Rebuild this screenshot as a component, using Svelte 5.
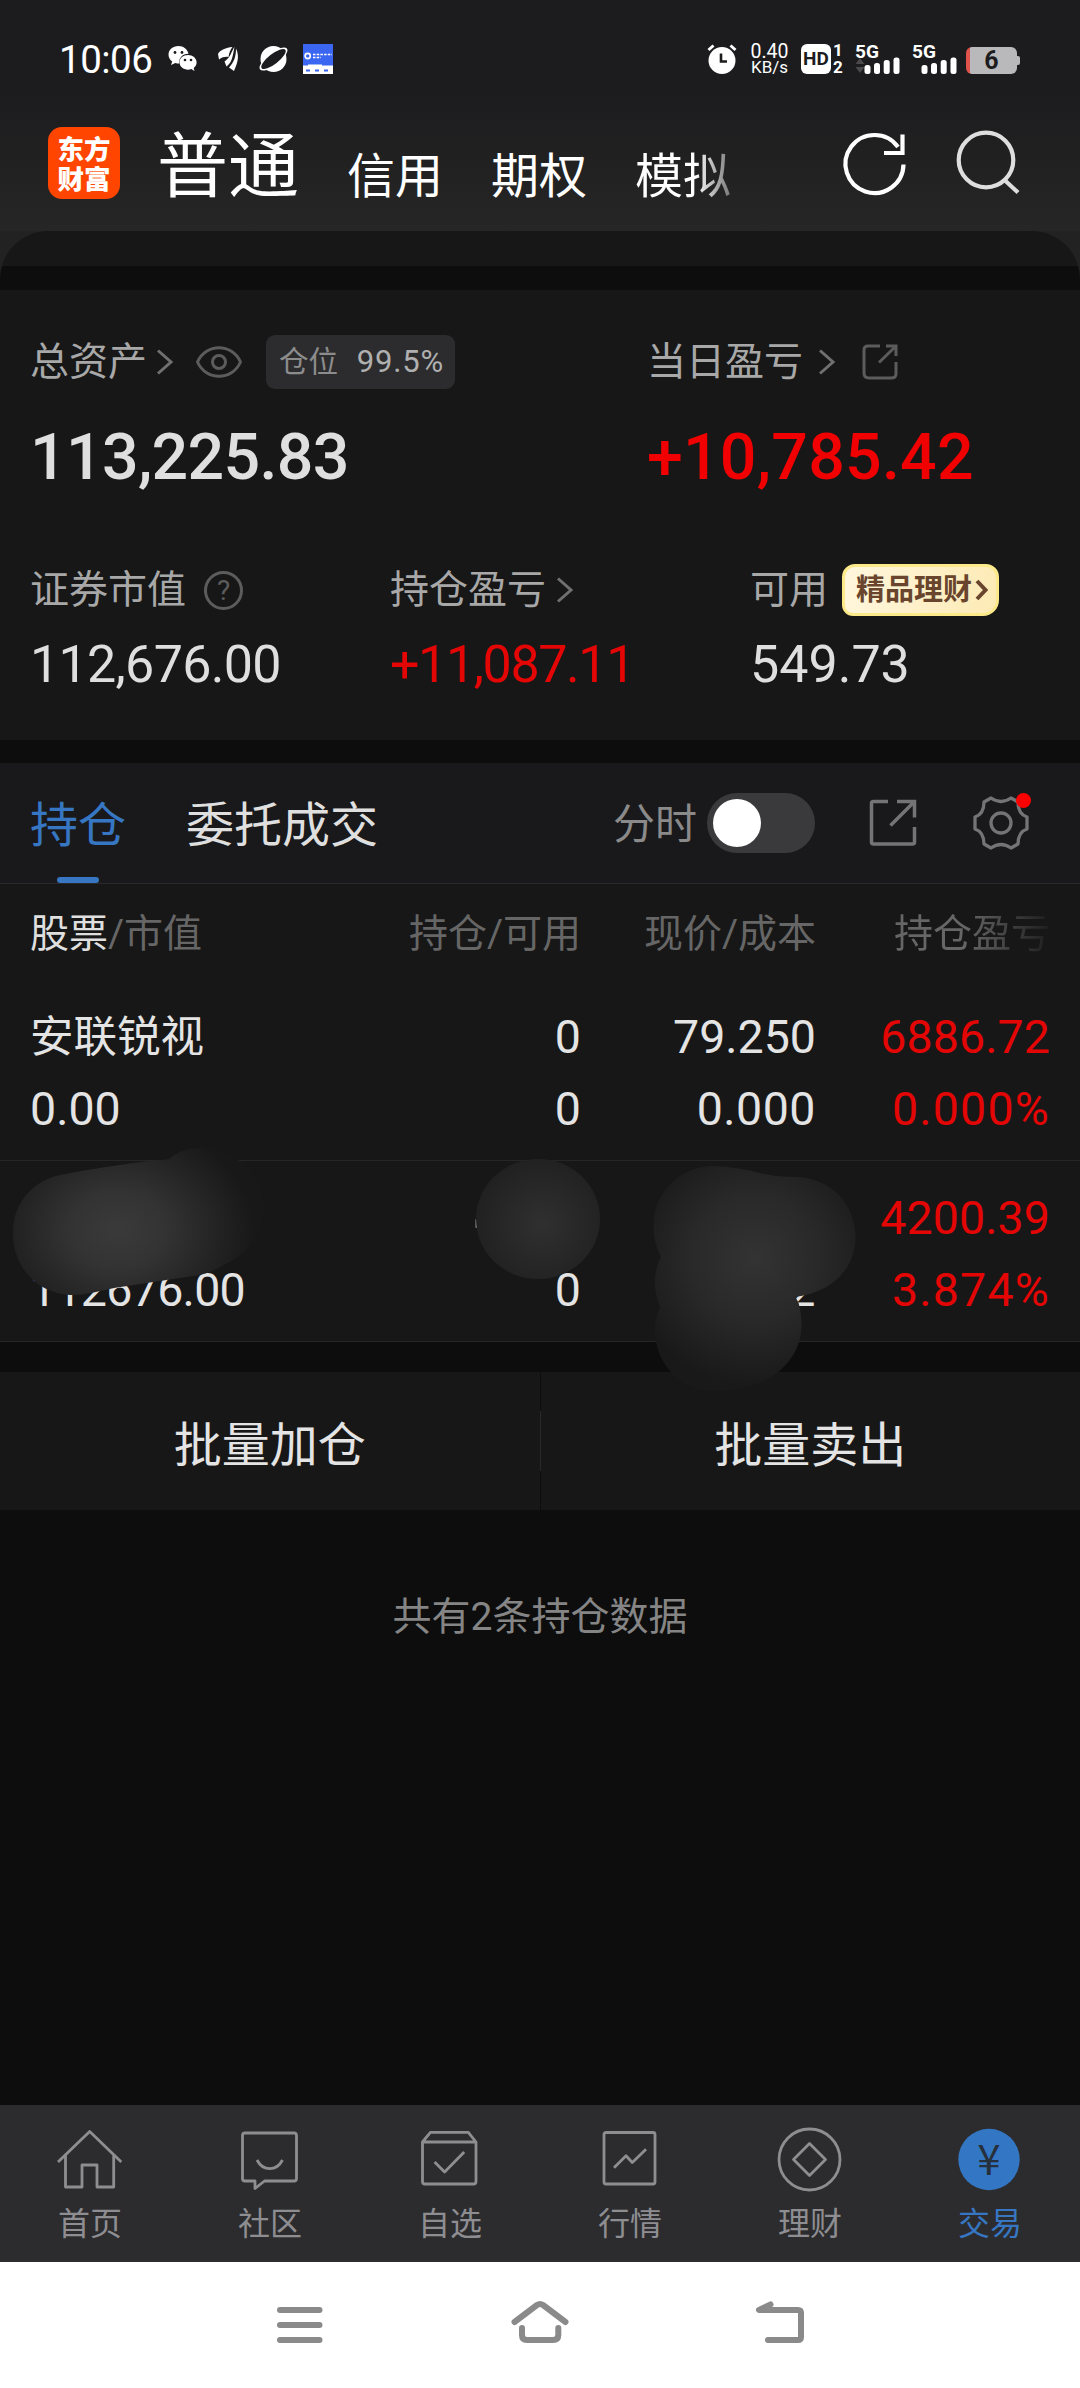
<script>
  const accounts = ['信用', '期权', '模拟'];
  const holdings = [
    { name: '安联锐视', value: '0.00', qty: '0', usable: '0', price: '79.250', cost: '0.000', profit: '6886.72', rate: '0.000%' },
    { name: '', value: '112676.00', qty: '', usable: '0', price: '', cost: '2', profit: '4200.39', rate: '3.874%' }
  ];
  const nav = [
    { id: 'home', label: '首页' },
    { id: 'social', label: '社区' },
    { id: 'watch', label: '自选' },
    { id: 'market', label: '行情' },
    { id: 'wealth', label: '理财' },
    { id: 'trade', label: '交易' }
  ];
</script>

{#snippet chevron()}
  <svg class="chev" width="18" height="28" viewBox="0 0 18 28"><path d="M2 2.5 15 14 2 25.5" /></svg>
{/snippet}

{#snippet signal(arrows)}
  <svg class="sig" width="46" height="32" viewBox="0 0 46 32">
    <text x="0" y="15" textLength="24" lengthAdjust="spacingAndGlyphs">5G</text>
    {#if arrows}<path d="m5 15 4.500 6h-9zM5 30l4.500-6h-9z" fill="#4a4a4c" />{/if}
    <rect x="9.500" y="22" width="6" height="9" rx="2.500" />
    <rect x="19" y="20" width="6" height="11" rx="2.500" />
    <rect x="28.700" y="17" width="6" height="14" rx="2.500" />
    <rect x="38.500" y="14.500" width="6" height="16.500" rx="2.500" />
  </svg>
{/snippet}

<div class="screen">
  <header>
    <div class="status">
      <span class="time">10:06</span>
      <svg class="s-wechat" width="30" height="28" viewBox="0 0 30 28">
        <path fill="#fff" d="M10.500 1C4.700 1 .5 4.900.5 9.700c0 2.800 1.500 5.200 3.700 6.800L3 20l4.300-2c1.400.5 2.700.6 4 .6C10.600 12.500 15 8.500 20.500 8.700 19.500 4.300 15.500 1 10.500 1z" />
        <path fill="#fff" d="M20 10c-4.700 0-8.500 3.200-8.500 7.300s3.800 7.400 8.500 7.400c1.200 0 2.300-.2 3.300-.6L26.500 26l-.8-3c1.900-1.400 2.900-3.400 2.900-5.700C28.600 13.200 24.700 10 20 10z" />
        <g fill="#1c1c1e"><circle cx="7" cy="7.500" r="1.400" /><circle cx="14" cy="7.500" r="1.400" /><circle cx="17" cy="15" r="1.300" /><circle cx="23" cy="15" r="1.300" /></g>
      </svg>
      <svg class="s-leaf" width="24" height="28" viewBox="0 0 24 28" fill="#fff">
        <path d="M15.500 2C9 2.500 3 5 1 9L2 14.500C5 12 9 11.500 11.500 12 12 8 13.500 4.500 15.500 2z" /><path d="M17.500 2C14 7 14 12 7.500 16.500L9.500 21.500C16 17 16 8 17.500 2z" /><path d="M19 3.500C19 12 17 17 12 22.500L17 26C20 19 23 12 19 3.500z" />
      </svg>
      <svg class="s-planet" width="31" height="28" viewBox="0 0 31 28">
        <circle cx="15.500" cy="14" r="13" fill="#fff" />
        <ellipse cx="15.500" cy="14" rx="17" ry="6.300" transform="rotate(-38 15.500 14)" fill="#fff" />
        <ellipse cx="15.500" cy="14" rx="15" ry="5" transform="rotate(-38 15.500 14)" fill="#1c1c1e" />
      </svg>
      <svg class="s-app" width="30" height="30" viewBox="0 0 30 30">
        <rect width="30" height="30" fill="#3b66f2" /><rect y="21.500" width="30" height="8.500" fill="#fff" /><rect x="5" y="20.500" width="14" height="2" fill="#fff" />
        <circle cx="4.700" cy="12" r="2.600" fill="none" stroke="#fff" stroke-width="1.700" />
        <path d="M10 10.500h19M10 13.500h8" stroke="#fff" stroke-width="1.400" stroke-dasharray="2.500 1.200" />
        <path d="M3 26.500h24" stroke="#3b66f2" stroke-width="2" stroke-dasharray="4 5" />
      </svg>
      <div class="spacer"></div>
      <svg width="30" height="32" viewBox="0 0 30 32">
        <circle cx="15" cy="17.500" r="13.500" fill="#fff" />
        <path d="M1.500 7 6.500 2.500M28.500 7 23.500 2.500" stroke="#fff" stroke-width="3" /><path d="M14 10.500V18.500h6" fill="none" stroke="#1c1c1e" stroke-width="2.600" />
      </svg>
      <div class="speed"><span>0.40</span><span class="unit">KB/s</span></div>
      <div class="hd">HD</div>
      <div class="sims"><span>1</span><span>2</span></div>
      {@render signal(true)}
      {@render signal(false)}
      <div class="battery">6</div>
    </div>
    <div class="bar">
      <div class="logo"><span>东方</span><span>财富</span></div>
      <div class="accounts">
        <span class="current">普通</span>
        {#each accounts as a, i}<span class="account" class:fade={i === 2}>{a}</span>{/each}
      </div>
      <svg class="refresh" width="68" height="72" viewBox="0 0 68 72" fill="none" stroke="#fff" stroke-width="4.200">
        <path d="M63.500 37.500A29 29 0 1 1 58 20" /><path d="M44 26H62.500V7.500" />
      </svg>
      <svg class="search" width="68" height="72" viewBox="0 0 68 72" fill="none" stroke="#dedede" stroke-width="4.200">
        <circle cx="30" cy="33" r="27.300" /><path d="M48.500 53 62 65.500" />
      </svg>
    </div>
  </header>

  <div class="curve"><div></div></div>

  <section class="assets">
    <div class="top">
      <div>
        <div class="lab first">总资产{@render chevron()}
          <svg class="eye" width="46" height="32" viewBox="0 0 46 32"><path d="M1.500 16C10-3 36-3 44.500 16 36 35 10 35 1.500 16z" /><circle cx="23" cy="16" r="6.500" /></svg>
          <span class="ratio">仓位<b>99.5%</b></span>
        </div>
        <div class="big">113,225.83</div>
      </div>
      <div>
        <div class="lab day">当日盈亏{@render chevron()}
          <svg class="share" width="36" height="36" viewBox="0 0 36 36"><path d="M18 2H6Q2 2 2 6V29Q2 34 7 34H29Q34 34 34 30V18M24 2h10v10M33 3 17 18.500" /></svg>
        </div>
        <div class="big up">+10,785.42</div>
      </div>
    </div>
    <div class="bottom">
      <div>
        <div class="lab">证券市值<span class="help">?</span></div>
        <div class="val marketval">112,676.00</div>
      </div>
      <div>
        <div class="lab hold">持仓盈亏{@render chevron()}</div>
        <div class="val up holdval">+11,087.11</div>
      </div>
      <div>
        <div class="lab">可用<span class="promo">精品理财<svg width="13" height="22" viewBox="0 0 13 22"><path d="M2 2 10.500 11 2 20" /></svg></span></div>
        <div class="val">549.73</div>
      </div>
    </div>
  </section>

  <section class="tabs">
    <span class="tab on">持仓</span>
    <span class="tab">委托成交</span>
    <div class="spacer"></div>
    <span class="minute">分时</span>
    <span class="toggle"><i></i></span>
    <svg class="out" width="48" height="48" viewBox="0 0 48 48"><path d="M19 2.500H4.500Q2.500 2.500 2.500 4.500V43Q2.500 45 4.500 45H43.500Q45.500 45 45.500 43V28M28 2.500H45.500V18.500M45 3 21.500 26.500" /></svg>
    <span class="gear">
      <svg width="56" height="56" viewBox="-28 -28 56 56">
        <path d="M-10-25Q0-18 10-25L17-21Q17-9 26-6V6Q17 9 17 21L10 25Q0 18-10 25L-17 21Q-17 9-26 6V-6Q-17-9-17-21Z" /><circle r="10" />
      </svg>
      <i></i>
    </span>
  </section>

  <section class="table">
    <div class="row head">
      <span><em>股票</em>/市值</span><span>持仓/可用</span><span>现价/成本</span><span class="fadehead">持仓盈亏</span>
    </div>
    <div class="list">
      {#each holdings as h}
        <div class="row item">
          <span>{h.name}</span><span>{h.qty}</span><span>{h.price}</span><span class="up">{h.profit}</span>
          <span>{h.value}</span><span>{h.usable}</span><span class="cost">{h.cost}</span><span class="up rate">{h.rate}</span>
        </div>
      {/each}
      <!-- privacy smudges over the second holding -->
      <svg class="smudge" width="1080" height="420" viewBox="0 980 1080 420">
        <defs>
          <radialGradient id="g1" gradientUnits="userSpaceOnUse" cx="118" cy="1230" r="136" gradientTransform="translate(0 246) scale(1 .8)"><stop offset="0" stop-color="#3a3a3a" /><stop offset=".35" stop-color="#333" /><stop offset="1" stop-color="#181818" /></radialGradient>
          <radialGradient id="g2" gradientUnits="userSpaceOnUse" cx="542" cy="1224" r="75"><stop offset="0" stop-color="#303030" /><stop offset="1" stop-color="#1f1f1f" /></radialGradient>
          <radialGradient id="g3" gradientUnits="userSpaceOnUse" cx="755" cy="1258" r="128"><stop offset="0" stop-color="#333" /><stop offset=".5" stop-color="#292929" /><stop offset="1" stop-color="#191919" /></radialGradient>
        </defs>
        <path fill="url(#g1)" d="M13 1233C13 1200 36 1180 60 1175Q100 1167 157 1160Q165 1160 169 1159C180 1150 190 1148 203 1148C237 1148 263 1177 263 1208C263 1233 250 1250 234 1259Q214 1272 200 1275L186 1277L114 1288C95 1292 85 1295 74 1295C38 1295 13 1268 13 1233Z" />
        <rect x="475.500" y="1219" width="1.500" height="9" rx=".7" fill="#999" />
        <ellipse cx="538" cy="1219" rx="62" ry="60" fill="url(#g2)" />
        <path fill="url(#g3)" d="M653.500 1225C653.500 1192 681 1166 714 1166Q738 1167 760 1173Q776 1177 795 1177C830 1177 855.500 1204 855.500 1237C855.500 1268 833 1292 795.500 1297Q799 1302 800 1309C806 1340 793 1360 777 1373Q765 1382 753 1385Q733 1391 715 1391C683 1391 655 1366 655 1330Q655 1318 660 1307C653 1290 653 1272 661 1257Q653.500 1243 653.500 1225Z" />
      </svg>
    </div>
  </section>

  <div class="actions"><span>批量加仓</span><i></i><span>批量卖出</span></div>
  <div class="empty">共有2条持仓数据</div>

  <nav>
    {#each nav as n}
      <div class="nav-item" class:active={n.id === 'trade'}>
        <svg width="72" height="72" viewBox="0 0 72 72">
          {#if n.id === 'home'}
            <path d="M4 38 35.700 7.500 67.300 38M11.500 31V63H28V41H43V63H59.700V31" />
          {:else if n.id === 'social'}
            <path d="M11 9H60Q62.500 9 62.500 11.500V54.500Q62.500 57 60 57H30.500L21 64.500V57H11Q8.500 57 8.500 54.500V11.500Q8.500 9 11 9Z" /><path d="M23 36C29 47.500 42.500 47.500 48.500 36" />
          {:else if n.id === 'watch'}
            <path d="M8.500 18 16.400 8.300H54.300L62 18V57.500Q62 60 59.500 60H11Q8.500 60 8.500 57.500ZM8.500 18H62M20.600 38 30.600 48 50.200 28" />
          {:else if n.id === 'market'}
            <rect x="10" y="8.500" width="51" height="51.500" rx="2" /><path d="M20 43.700 32 31.700 38.300 38.500 52 25.300" />
          {:else if n.id === 'wealth'}
            <circle cx="35.500" cy="35.500" r="30.500" /><path d="M35.500 19.500 51.500 35.500 35.500 51.500 19.500 35.500Z" />
          {:else}
            <circle class="coin" cx="35" cy="35.500" r="30.700" /><text x="35" y="51" text-anchor="middle">¥</text>
          {/if}
        </svg>
        <span>{n.label}</span>
      </div>
    {/each}
  </nav>

  <footer>
    <svg width="72" height="72" viewBox="0 0 72 72"><path d="M16 21H55.500M16 36H55.500M16 51H55.500" /></svg>
    <svg width="72" height="72" viewBox="0 0 72 72"><path d="M10.500 33 33 16Q36 14 39 16L61.500 33M18 39V46Q18 51 23 51H49Q54.300 51 54.300 46V39" /></svg>
    <svg width="72" height="72" viewBox="0 0 72 72"><path d="M26.500 15.500 15 21H54Q57 21 57 24V48Q57 51 54 51H24" /></svg>
  </footer>
</div>

<style>
  :global(body) { background: #0d0d0d; }
  .screen { width: 1080px; height: 2388px; display: flex; flex-direction: column; background: #0d0d0d; color: #dfdfdf; font-family: Roboto, "Noto Sans CJK SC", sans-serif; overflow: hidden; white-space: nowrap; }
  .screen svg { flex: none; }
  .spacer { flex: 1; }
  header { height: 231px; background: linear-gradient(#1c1c1e 40%, #262626); }
  .status { display: flex; align-items: center; height: 30px; padding: 44px 63px 0 59px; color: #fff; }
  .time { font-size: 38.500px; line-height: 32px; width: 94px; letter-spacing: -.5px; padding-top: 1px; }
  .s-wechat { margin-left: 15px; }
  .s-leaf { margin-left: 19px; }
  .s-planet { margin-left: 17px; }
  .s-app { margin-left: 14px; }
  .speed { width: 39px; margin-left: 13px; display: flex; flex-direction: column; align-items: center; font: 19.500px/16px Roboto, sans-serif; }
  .speed .unit { font-size: 17px; line-height: 15px; }
  .hd { width: 30px; height: 30px; border-radius: 6px; margin-left: 12px; background: #fff; color: #1c1c1e; font: 700 19px/30px Roboto, sans-serif; text-align: center; }
  .sims { width: 12px; margin-left: 1px; display: flex; flex-direction: column; align-items: center; font: 700 17px/17px Roboto, sans-serif; }
  .sig { fill: #fff; margin-left: 11px; overflow: visible; }
  .sig text { font: 700 19px Roboto, sans-serif; }
  .battery { position: relative; width: 51px; height: 27px; border-radius: 6px; margin-left: 8px; top: 1px; background: linear-gradient(90deg, #e0524a 4px, #b9b9bb 4px); color: #1c1c1e; font: 700 25px/28px Roboto, sans-serif; text-align: center; }
  .battery::after { content: ""; position: absolute; right: -3px; top: 9px; width: 3px; height: 9px; border-radius: 0 2px 2px 0; background: #b9b9bb; }
  .bar { display: flex; align-items: center; height: 72px; margin-top: 53px; padding-left: 48px; color: #fff; }
  .logo { width: 72px; height: 72px; border-radius: 14px; background: #ff4500; display: flex; flex-direction: column; align-items: center; justify-content: center; font: 900 26.500px/30px "Noto Sans CJK SC", sans-serif; }
  .accounts { display: flex; align-items: baseline; gap: 48px; margin-left: 37px; padding-top: 15px; width: 580px; font-size: 48px; line-height: 72px; }
  .current { font-size: 71px; }
  .account { padding-top: 2px; transform: translateY(2px); }
  .fade { background: linear-gradient(90deg, #fff 62%, #777); background-clip: text; color: transparent; }
  .refresh { margin-left: 103px; }
  .search { margin-left: 48px; }
  .curve { height: 59px; background: #222223; }
  .curve div { height: 59px; border-radius: 48px 48px 0 0; background: linear-gradient(#171717 35px, #0d0d0d 35px); }
  .assets { height: 450px; box-sizing: border-box; padding: 45px 0 0 30px; background: #171717; }
  .top { display: grid; grid-template-columns: 617px 1fr; }
  .bottom { display: grid; grid-template-columns: 360px 360px 1fr; margin-top: 75px; }
  .lab { display: flex; align-items: center; height: 54px; font-size: 39px; line-height: 50px; color: #a8a8a8; }
  .bottom .lab { height: 52px; }
  .chev { margin-left: 9px; fill: none; stroke: #707070; stroke-width: 3; }
  .day .chev { margin-left: 15px; }
  .hold .chev { margin-left: 10px; }
  .eye { margin-left: 22px; fill: none; stroke: #5c5c5c; stroke-width: 3; }
  .ratio { box-sizing: border-box; width: 189px; height: 54px; margin-left: 24px; padding: 0 11px 0 13px; border-radius: 9px; background: #2c2c2e; color: #8c8c8c; font-size: 29.500px; display: flex; align-items: center; justify-content: space-between; }
  .ratio b { font-weight: 400; color: #b0b0b0; font-size: 31px; letter-spacing: .8px; }
  .share { margin-left: 26px; fill: none; stroke: #5c5c5c; stroke-width: 3; }
  .big { height: 64px; line-height: 64px; margin-top: 36px; font-size: 64.500px; font-weight: 500; letter-spacing: -.7px; }
  .val { height: 52px; line-height: 52px; margin-top: 23px; font-size: 52px; }
  .marketval { letter-spacing: -.7px; }
  .holdval { letter-spacing: -1.400px; }
  .up { color: #e40505; }
  .big.up { color: #f00000; letter-spacing: .2px; }
  .help { box-sizing: border-box; width: 39px; height: 39px; border: 3px solid #5c5c5c; border-radius: 50%; margin-left: 18px; color: #5c5c5c; font: 28px/34px Roboto, sans-serif; text-align: center; }
  .promo { box-sizing: border-box; width: 157px; height: 52px; margin-left: 14px; padding: 0 11px; border: 3px solid #fce98a; border-radius: 13px 13px 16px 11px; background: linear-gradient(100deg, #fff6dd, #fdebb5); color: #68452c; font-size: 29px; font-weight: 700; display: flex; align-items: center; gap: 3px; }
  .promo svg { fill: none; stroke: #68452c; stroke-width: 4; }
  .tabs { display: flex; align-items: center; box-sizing: border-box; height: 121px; margin-top: 23px; padding: 0 51px 0 30px; background: #19191b; border-bottom: 1px solid #29292b; font-size: 48px; }
  .tab { position: relative; height: 120px; margin-right: 60px; line-height: 125px; }
  .tab.on { color: #3676c2; }
  .tab.on::after { content: ""; position: absolute; left: 27px; bottom: 0; width: 42px; height: 6px; border-radius: 3px; background: #3676c2; }
  .minute { font-size: 42px; line-height: 60px; color: #8a8a8a; padding-top: 3px; }
  .toggle { width: 108px; height: 60px; box-sizing: border-box; padding: 6px; margin-left: 10px; border-radius: 30px; background: #3a3a3c; }
  .toggle i { display: block; width: 48px; height: 48px; border-radius: 50%; background: #fff; }
  .out { margin-left: 54px; fill: none; stroke: #747476; stroke-width: 3.500; }
  .gear { position: relative; height: 56px; margin-left: 56px; }
  .gear svg { display: block; fill: none; stroke: #747476; stroke-width: 3.300; stroke-linejoin: round; }
  .gear i { position: absolute; left: 43px; top: -2px; width: 15px; height: 15px; border-radius: 50%; background: #f00; }
  .table { background: #171717; }
  .row { display: grid; grid-template-columns: 281px 270px 235px 234px; padding: 0 30px; text-align: right; }
  .row span:nth-child(4n + 1) { text-align: left; }
  .head { height: 96px; line-height: 101px; font-size: 39px; color: #666; }
  .head em { font-style: normal; color: #dfdfdf; }
  .fadehead { background: linear-gradient(90deg, #666 64%, #1e1e1e 100%); background-clip: text; color: transparent; }
  .list { position: relative; }
  .item { box-sizing: border-box; height: 181px; padding-top: 21px; grid-auto-rows: 72px; line-height: 72px; font-size: 46.500px; color: #e4e4e4; border-bottom: 1px solid #262626; }
  .item .up { letter-spacing: .1px; }
  .item .rate { letter-spacing: 1.200px; }
  .item .cost { letter-spacing: .5px; }
  .item:nth-child(2) span:nth-child(5) { letter-spacing: -.7px; }
  .item:first-child span:first-child { font-size: 43.500px; line-height: 74px; }
  .smudge { position: absolute; left: 0; top: 0; z-index: 1; }
  .actions { display: flex; align-items: center; height: 138px; margin-top: 30px; background: #171717; font-size: 48px; color: #e4e4e4; }
  .actions span { flex: 1; text-align: center; }
  .actions i { width: 1px; height: 138px; background: linear-gradient(#0d0d0d 39px, #29292b 39px 99px, #0d0d0d 99px); }
  .empty { flex: 1; padding-top: 77px; line-height: 60px; font-size: 39px; text-align: center; color: #858585; }
  nav { display: grid; grid-template-columns: repeat(6, 1fr); height: 157px; background: #2c2c2e; }
  .nav-item { display: flex; flex-direction: column; align-items: center; padding-top: 19px; font-size: 32px; line-height: 40px; color: #8e8e92; }
  .nav-item svg { fill: none; stroke: #8e8e92; stroke-width: 2.800; stroke-linejoin: round; }
  .nav-item span { margin-top: 8px; }
  .nav-item .coin { fill: #3377c4; stroke: none; }
  .nav-item text { fill: #26303c; stroke: none; font: 42px "Noto Sans CJK SC", sans-serif; }
  .nav-item.active { color: #3676c2; }
  footer { display: grid; grid-template-columns: repeat(3, 240px); justify-content: center; justify-items: center; align-items: center; height: 126px; background: #fff; }
  footer svg { fill: none; stroke: #8a8a8a; stroke-width: 6; stroke-linecap: round; stroke-linejoin: round; }
</style>
